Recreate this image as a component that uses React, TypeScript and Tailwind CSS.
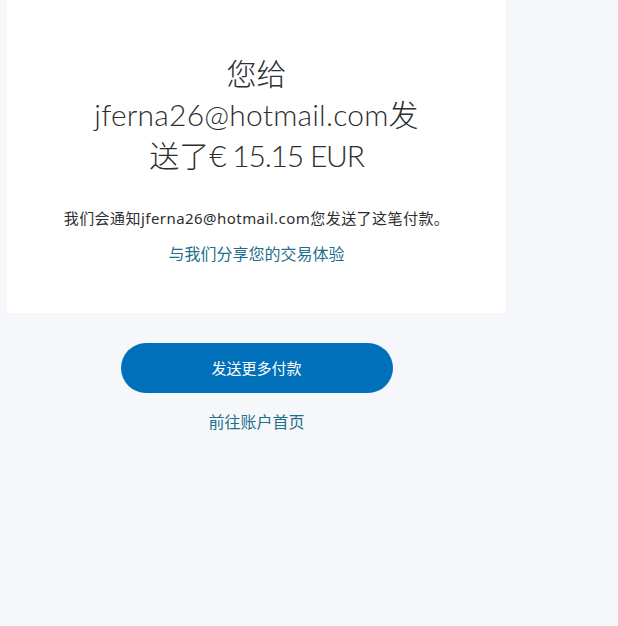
const App = () => {
  return (
    <div className="min-h-[626px] w-full bg-[#f5f7fa] font-['Noto_Sans','Noto_Sans_CJK_SC',sans-serif] text-[#2c2e2f]">
      <div className="flex w-[506px] flex-col items-center pl-[7px]">
        <div className="flex h-[313px] w-full flex-col items-center bg-white pt-[53px]">
          <h1 className="text-center font-['Lato','Noto_Sans_CJK_SC',sans-serif] text-[30px] font-light leading-[41px] text-[#2c2e2f]">
            <span className="block">您给</span>
            <span className="block tracking-[0.2px]">jferna26@hotmail.com发</span>
            <span className="block">
              送了<span className="tracking-[-1.2px]">€ 15.15 EUR</span>
            </span>
          </h1>
          <p className="mt-[32px] text-[15px] leading-[20px] tracking-[0.45px] text-[#2c2e2f]">
            我们会通知jferna26@hotmail.com您发送了这笔付款。
          </p>
          <a href="#" className="mt-[16px] text-[16px] leading-[20px] text-[#1f6f8b]">
            与我们分享您的交易体验
          </a>
        </div>
        <button className="mt-[30px] flex h-[50px] w-[272px] items-center justify-center rounded-full bg-[#0070ba] text-[15px] text-white">
          发送更多付款
        </button>
        <a href="#" className="mt-[19px] text-[16px] leading-[20px] text-[#1f6f8b]">
          前往账户首页
        </a>
      </div>
    </div>
  );
};

export default App;
